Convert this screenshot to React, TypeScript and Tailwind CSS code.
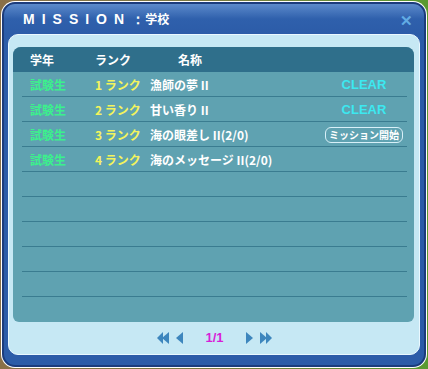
const rows = [
  { grade: "試験生", rank: "1 ランク", name: "漁師の夢 II", status: "clear" },
  { grade: "試験生", rank: "2 ランク", name: "甘い香り II", status: "clear" },
  { grade: "試験生", rank: "3 ランク", name: "海の眼差し II(2/0)", status: "start" },
  { grade: "試験生", rank: "4 ランク", name: "海のメッセージ II(2/0)", status: "" },
];

const font = { fontFamily: '"Noto Sans CJK JP", "Liberation Sans", sans-serif' };
const latin = { fontFamily: '"Liberation Sans", sans-serif' };

const Arrow = ({ dir, double }: { dir: "l" | "r"; double?: boolean }) => (
  <svg width={double ? 13 : 8} height="12" viewBox={double ? "0 0 13 12" : "0 0 8 12"} fill="#3d86bd">
    {dir === "l" ? (
      double ? (
        <>
          <polygon points="7,0 7,12 1,6" />
          <polygon points="13,0 13,12 6,6" />
        </>
      ) : (
        <polygon points="8,0 8,12 1,6" />
      )
    ) : double ? (
      <>
        <polygon points="0,0 0,12 7,6" />
        <polygon points="6,0 6,12 12,6" />
      </>
    ) : (
      <polygon points="0,0 0,12 7,6" />
    )}
  </svg>
);

const Row = ({ row, last }: { row?: (typeof rows)[number]; last?: boolean }) => (
  <div className="relative h-[25px] flex items-center text-[12px] font-semibold">
    {row && (
      <>
        <div className="w-[82px] pl-[17px] text-[#3cf08c]">{row.grade}</div>
        <div className="w-[55px] text-[#f4f45c]">{row.rank}</div>
        <div className="flex-1 text-white">{row.name}</div>
        <div className="w-[86px] mr-[7px] flex justify-center">
          {row.status === "clear" && (
            <span className="text-[13px] text-[#3ce8f0] font-bold" style={latin}>
              CLEAR
            </span>
          )}
          {row.status === "start" && (
            <span className="w-[78px] h-[16px] flex items-center justify-center rounded-[6px] border border-[#d8f0f8] text-[10px] text-white leading-none">
              ミッション開始
            </span>
          )}
        </div>
      </>
    )}
    {!last && <div className="absolute bottom-0 left-[9px] right-[7px] h-px bg-[#3a7c90]" />}
  </div>
);

export default function App() {
  const empty = Array.from({ length: 6 });
  return (
    <div className="w-[428px] h-[369px] p-[1px] bg-gradient-to-r from-[#8a7048] via-[#7a7a40] to-[#5a9a30]" style={font}>
      <div className="h-full rounded-[14px] bg-white p-[1px]">
        <div className="h-full flex flex-col rounded-[13px] border-2 border-[#1c3c7c] bg-[#2c5ca8] bg-gradient-to-b from-[#5c8acb] via-[#2f60ac] to-[#2c5ca8] [background-size:100%_30px] bg-no-repeat">
          <div className="h-[30px] flex items-center justify-between pl-[19px] pr-[11px]">
            <div className="text-white text-[14px] font-bold tracking-[7px] flex items-center" style={latin}>
              MISSION<span className="tracking-normal">：</span>
              <span className="tracking-normal text-[12px]" style={font}>学校</span>
            </div>
            <span className="text-[#62ace4] text-[15px] font-bold leading-none">✕</span>
          </div>
          <div className="flex-1 mx-[4px] mb-[10px] rounded-[10px] border border-[#eaf8ff] bg-[#c6e8f4] flex flex-col pt-[12px] pl-[4px] pr-[5px]">
            <div className="rounded-t-[8px] rounded-b-[6px] bg-[#5fa2b1] overflow-hidden">
              <div className="h-[25px] bg-[#2f6f8b] flex items-center text-white text-[12px] font-bold">
                <div className="w-[82px] pl-[17px]">学年</div>
                <div className="w-[83px]">ランク</div>
                <div>名称</div>
              </div>
              {rows.map((r, i) => (
                <Row key={i} row={r} />
              ))}
              {empty.map((_, i) => (
                <Row key={i} last={i === empty.length - 1} />
              ))}
            </div>
            <div className="flex-1 flex items-center justify-center gap-[6px] pl-[2px]">
              <Arrow dir="l" double />
              <Arrow dir="l" />
              <span className="mx-[16px] text-[13px] font-bold text-[#d81ed8]" style={latin}>
                1/1
              </span>
              <Arrow dir="r" />
              <Arrow dir="r" double />
            </div>
          </div>
        </div>
      </div>
    </div>
  );
}
